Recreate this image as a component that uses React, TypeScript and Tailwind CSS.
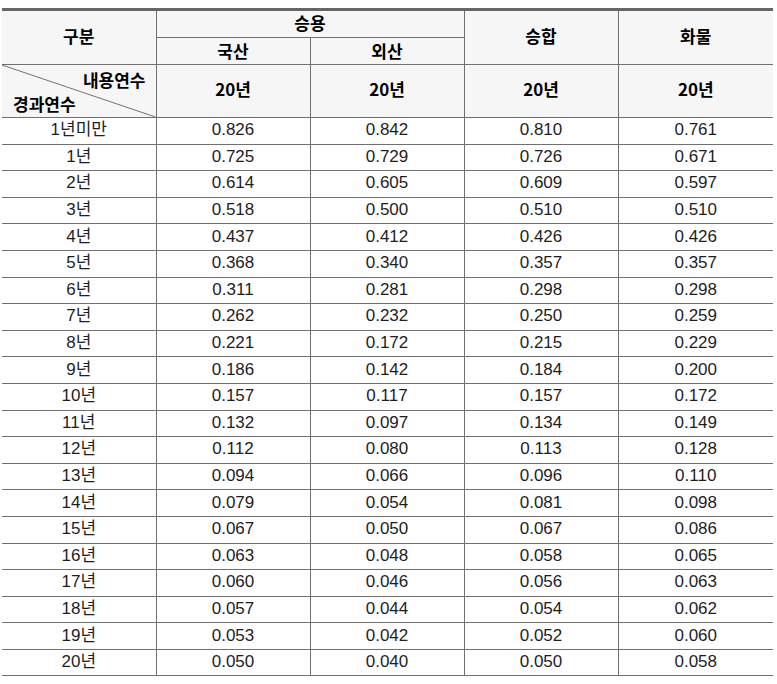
import React from "react";

const rows: [string, string, string, string, string][] = [
  ["1년미만", "0.826", "0.842", "0.810", "0.761"],
  ["1년", "0.725", "0.729", "0.726", "0.671"],
  ["2년", "0.614", "0.605", "0.609", "0.597"],
  ["3년", "0.518", "0.500", "0.510", "0.510"],
  ["4년", "0.437", "0.412", "0.426", "0.426"],
  ["5년", "0.368", "0.340", "0.357", "0.357"],
  ["6년", "0.311", "0.281", "0.298", "0.298"],
  ["7년", "0.262", "0.232", "0.250", "0.259"],
  ["8년", "0.221", "0.172", "0.215", "0.229"],
  ["9년", "0.186", "0.142", "0.184", "0.200"],
  ["10년", "0.157", "0.117", "0.157", "0.172"],
  ["11년", "0.132", "0.097", "0.134", "0.149"],
  ["12년", "0.112", "0.080", "0.113", "0.128"],
  ["13년", "0.094", "0.066", "0.096", "0.110"],
  ["14년", "0.079", "0.054", "0.081", "0.098"],
  ["15년", "0.067", "0.050", "0.067", "0.086"],
  ["16년", "0.063", "0.048", "0.058", "0.065"],
  ["17년", "0.060", "0.046", "0.056", "0.063"],
  ["18년", "0.057", "0.044", "0.054", "0.062"],
  ["19년", "0.053", "0.042", "0.052", "0.060"],
  ["20년", "0.050", "0.040", "0.050", "0.058"],
];

const thBase = "border-b border-b-[#707070] p-0 font-bold leading-none";
const thR = thBase + " border-r border-r-[#707070]";

export default function App() {
  return (
    <div className="w-[777px] h-[684px] bg-white pt-[8px] pl-[2px]">
      <table
        className="w-[771px] border-collapse table-fixed text-[#1e1e1e]"
        style={{ fontFamily: '"Liberation Sans", "Noto Sans CJK KR", sans-serif' }}
      >
        <colgroup>
          <col className="w-[154px]" />
          <col className="w-[154px]" />
          <col className="w-[154px]" />
          <col className="w-[154px]" />
          <col className="w-[155px]" />
        </colgroup>
        <thead
          className="bg-[#f6f6f6] font-bold text-[17px] text-black"
          style={{ fontFamily: '"Noto Sans CJK KR", sans-serif' }}
        >
          <tr className="h-[28px]">
            <th rowSpan={2} className={thR + " border-t-[3px] border-t-[#666666] pb-[4px]"}>
              구분
            </th>
            <th colSpan={2} className={thR + " border-t-[3px] border-t-[#666666] pb-[3px]"}>
              승용
            </th>
            <th rowSpan={2} className={thR + " border-t-[3px] border-t-[#666666] pb-[4px]"}>
              승합
            </th>
            <th rowSpan={2} className={thBase + " border-t-[3px] border-t-[#666666] pb-[4px]"}>
              화물
            </th>
          </tr>
          <tr className="h-[27px]">
            <th className={thR + " pb-[2px]"}>국산</th>
            <th className={thR + " pb-[2px]"}>외산</th>
          </tr>
          <tr className="h-[52px]">
            <th className="relative border-b border-b-[#707070] border-r border-r-[#707070] p-0 font-bold">
              <svg
                className="absolute inset-0 w-full h-full"
                viewBox="0 0 154 52"
                preserveAspectRatio="none"
              >
                <line x1="0" y1="0" x2="154" y2="52" stroke="#707070" strokeWidth="1" />
              </svg>
              <div className="relative flex flex-col h-[52px] justify-between pt-[4px] pb-[3px] leading-none">
                <div className="text-right pr-[10px] pt-[2px]">내용연수</div>
                <div className="text-left pl-[11px] pb-[2px]">경과연수</div>
              </div>
            </th>
            <th className={thR + " pb-[5px]"}>20년</th>
            <th className={thR + " pb-[5px]"}>20년</th>
            <th className={thR + " pb-[5px]"}>20년</th>
            <th className={thBase + " pb-[5px]"}>20년</th>
          </tr>
        </thead>
        <tbody className="text-[17px]">
          {rows.map((r) => (
            <tr key={r[0]} className="h-[26.6px]">
              {r.map((c, i) => (
                <td
                  key={i}
                  className={
                    i < 4
                      ? "border-b border-b-[#707070] border-r border-r-[#707070] p-0 pb-[2px] text-center leading-none"
                      : "border-b border-b-[#707070] p-0 pb-[2px] text-center leading-none"
                  }
                >
                  {c}
                </td>
              ))}
            </tr>
          ))}
        </tbody>
      </table>
    </div>
  );
}
